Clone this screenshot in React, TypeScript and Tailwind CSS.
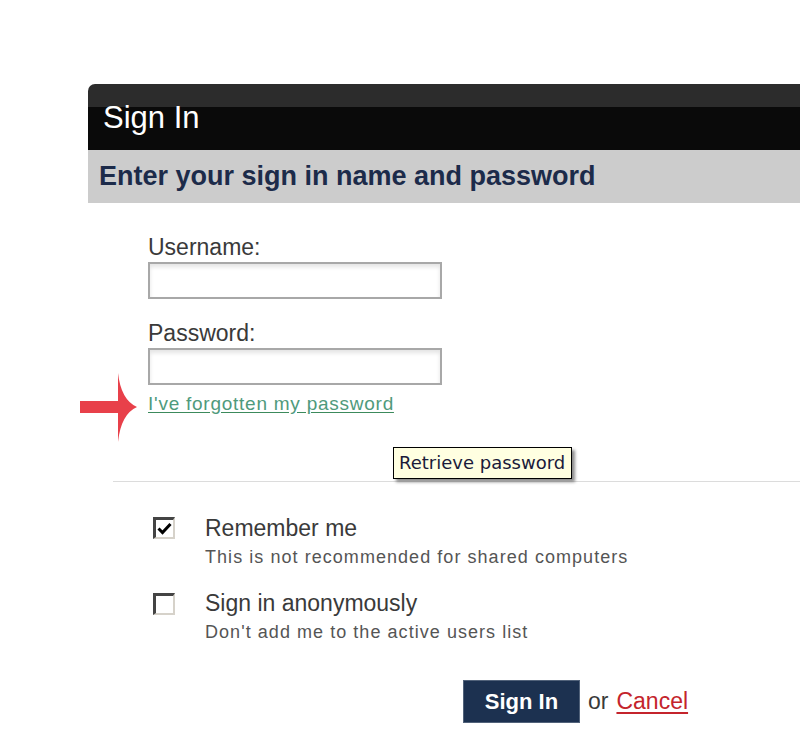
import { useState } from 'react';

function RedArrow() {
  return (
    <svg className="absolute left-[78px] top-[370px]" width="62" height="76" viewBox="0 0 62 76">
      <rect x="2" y="31" width="42" height="12" fill="#e8404a" />
      <path d="M40 3 Q43 30 59 37 Q43 44 40 72 Z" fill="#e8404a" />
    </svg>
  );
}

function Checkbox({ checked, onClick }: { checked: boolean; onClick: () => void }) {
  return (
    <button
      onClick={onClick}
      className="w-[22px] h-[22px] shrink-0 bg-white border-t-[3px] border-l-[3px] border-t-[#444] border-l-[#444] border-b-2 border-r-2 border-b-[#d6d2ca] border-r-[#d6d2ca] flex items-center justify-center"
    >
      {checked && (
        <svg width="15" height="13" viewBox="0 0 15 13">
          <path d="M1.5 6.5 L5.5 10.5 L13.5 2" stroke="#000" strokeWidth="3" fill="none" />
        </svg>
      )}
    </button>
  );
}

export default function App() {
  const [remember, setRemember] = useState(true);
  const [anon, setAnon] = useState(false);

  return (
    <div className="relative w-[800px] h-[746px] overflow-hidden bg-white font-['Liberation_Sans',Arial,sans-serif]">
      <RedArrow />

      <div className="pt-[84px] pl-[88px]">
        {/* Header */}
        <div className="h-[66px] rounded-tl-[7px] bg-[linear-gradient(to_bottom,#2c2c2c_0,#2c2c2c_23px,#0a0a0a_23px)] pl-[15px] pt-[17px]">
          <h1 className="text-white text-[31px] leading-[34px]">Sign In</h1>
        </div>
        <div className="h-[53px] bg-[#cccccc] pl-[11px] pt-[11px]">
          <h2 className="text-[#1c2b4a] text-[27px] leading-[30px] font-bold">Enter your sign in name and password</h2>
        </div>

        {/* Fields */}
        <div className="pl-[60px] pt-[31px]">
          <label className="block text-[23px] leading-[26px] text-[#3a3a3a]">Username:</label>
          <input
            type="text"
            className="mt-[2px] block w-[294px] h-[37px] border-2 border-[#a8a8a8] bg-white shadow-[inset_0_3px_4px_#e4e4e4] outline-none px-2 text-[18px]"
          />
          <label className="block mt-[21px] text-[23px] leading-[26px] text-[#3a3a3a]">Password:</label>
          <input
            type="password"
            className="mt-[2px] block w-[294px] h-[37px] border-2 border-[#a8a8a8] bg-white shadow-[inset_0_3px_4px_#e4e4e4] outline-none px-2 text-[18px]"
          />
          <a href="#" className="inline-block mt-[8px] text-[19px] leading-[22px] tracking-[0.75px] text-[#4f9a7c] underline decoration-[#3c8a5c] underline-offset-2">
            I've forgotten my password
          </a>
        </div>

        {/* Divider */}
        <div className="ml-[25px] mt-[64px] h-px bg-[#dcdcdc]" />

        {/* Options */}
        <div className="pl-[65px] pt-[34px] flex flex-col gap-[23px]">
          <div className="flex gap-[30px]">
            <div className="pt-[1px]">
              <Checkbox checked={remember} onClick={() => setRemember(!remember)} />
            </div>
            <div>
              <div className="text-[23px] leading-[24px] text-[#3a3a3a]">Remember me</div>
              <div className="mt-[6px] text-[18px] leading-[22px] tracking-[1.05px] text-[#555]">This is not recommended for shared computers</div>
            </div>
          </div>
          <div className="flex gap-[30px]">
            <div className="pt-[2px]">
              <Checkbox checked={anon} onClick={() => setAnon(!anon)} />
            </div>
            <div>
              <div className="text-[23px] leading-[24px] text-[#3a3a3a]">Sign in anonymously</div>
              <div className="mt-[6px] text-[18px] leading-[22px] tracking-[1.05px] text-[#555]">Don't add me to the active users list</div>
            </div>
          </div>
        </div>

        {/* Actions */}
        <div className="pl-[375px] pt-[37px] flex items-center gap-[8px]">
          <button className="w-[117px] h-[43px] bg-[#1c3150] border border-[#51627a] text-white font-bold text-[22px]">
            Sign In
          </button>
          <span className="text-[23px] text-[#3a3a3a]">or</span>
          <a href="#" className="text-[23px] text-[#c4242c] underline underline-offset-[3px]">Cancel</a>
        </div>
      </div>

      {/* Tooltip */}
      <div className="absolute left-[393px] top-[447px] w-[179px] h-[32px] bg-[#ffffe1] border border-black shadow-[3px_3px_3px_rgba(0,0,0,0.45)] flex items-center pl-[5px]">
        <span className="font-['DejaVu_Sans',sans-serif] text-[18px] text-[#1a1a3a] leading-none">Retrieve password</span>
      </div>
    </div>
  );
}
